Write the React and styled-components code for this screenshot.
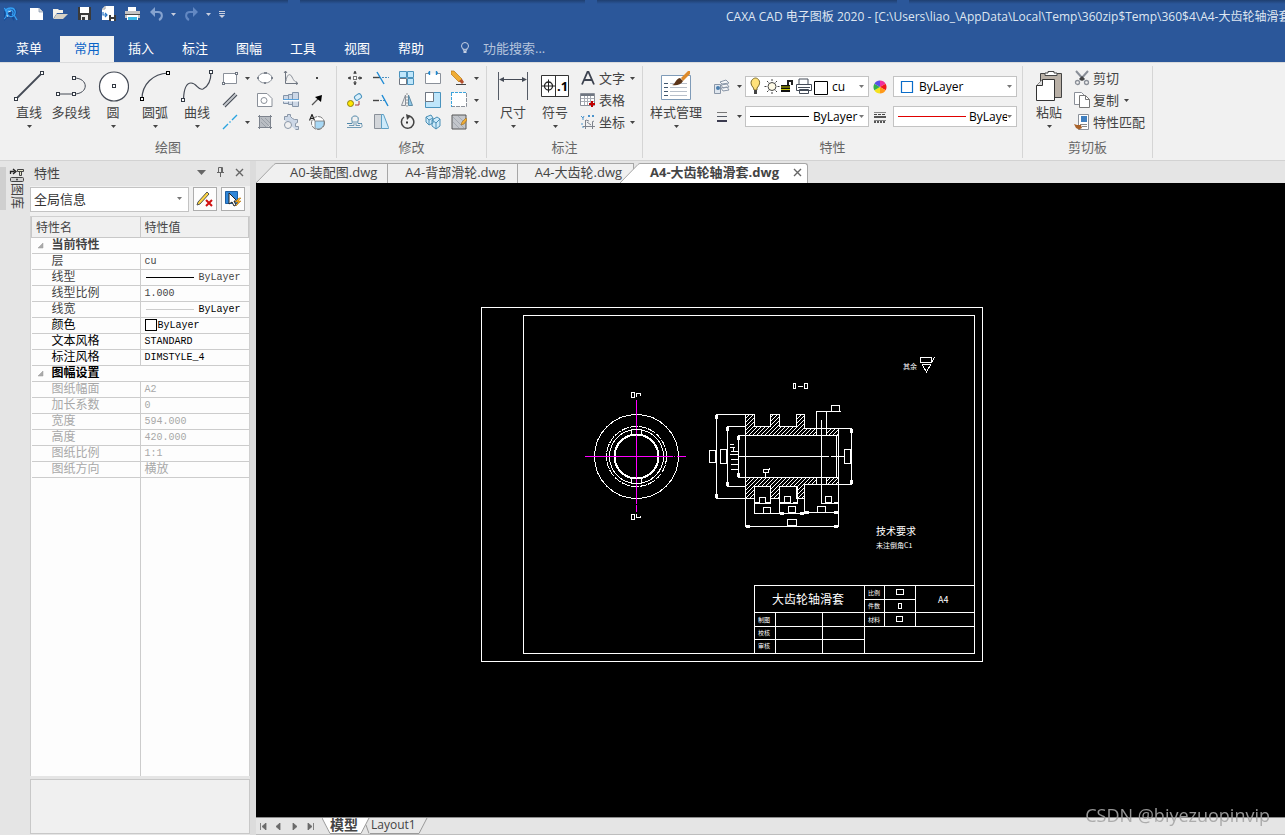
import { useState } from "react";
import styled, { createGlobalStyle, css } from "styled-components";

const GlobalStyle = createGlobalStyle`
  * {
    box-sizing: border-box;
  }

  body {
    margin: 0;
    background: #e5e5e5;
    color: #444444;
    font-family: "Open Sans", "Noto Sans CJK SC", sans-serif;
    font-size: 12px;
  }

  button,
  input,
  select {
    font: inherit;
    color: inherit;
    margin: 0;
    padding: 0;
    border: 0;
    background: transparent;
  }
`;

const Window = styled.div`
  display: flex;
  flex-direction: column;
  height: 100vh;
  overflow: hidden;
`;

/* ---------- title bar ---------- */

const Header = styled.header`
  background: #2b579a;
`;

const EdgeShadow = styled.div`
  display: flex;
  gap: 12px;
  height: 4px;
  overflow: hidden;
`;

const EdgePart = styled.span`
  flex: ${({ $grow }) => $grow} 1 0;
  background: linear-gradient(#1f3f70, #2b579a);
`;

const TitleBar = styled.div`
  display: grid;
  grid-template-columns: minmax(0, 565fr) minmax(0, 435fr);
  align-items: start;
  height: 32px;
  overflow: hidden;
`;

const QuickAccess = styled.div`
  display: flex;
  align-items: center;
  height: 20px;
`;

const QuickButton = styled.button`
  display: flex;
  align-items: center;
  justify-content: center;
  width: ${({ $narrow }) => ($narrow ? "11px" : "24px")};
  height: 20px;
`;

const WindowTitle = styled.div`
  color: #dfe6f1;
  font-size: 12px;
  line-height: 26px;
  white-space: nowrap;
`;

const MenuBar = styled.nav`
  display: flex;
  height: 26px;
`;

const MenuTab = styled.button`
  width: ${({ $wide }) => ($wide ? "60px" : "54px")};
  padding: ${({ $wide }) => ($wide ? "0 2px 2px 0" : "0 0 2px")};
  font-size: 13px;
  line-height: 24px;
  color: #ffffff;

  ${({ $active }) =>
    $active &&
    css`
      background: #f1f1f1;
      color: #0a64c8;
    `}
`;

const SearchBox = styled.label`
  display: flex;
  align-items: center;
  gap: 13px;
  padding: 0 0 2px 22px;
`;

const SearchInput = styled.input`
  width: 120px;
  font-size: 13px;
  color: #ffffff;
  outline: none;

  &::placeholder {
    color: #b4c3dc;
    opacity: 1;
  }
`;

/* ---------- ribbon ---------- */

const RibbonBar = styled.div`
  display: flex;
  flex: none;
  height: 99px;
  padding-top: 3px;
  background: #f1f1f1;
  border-top: 1px solid #dadbdc;
  border-bottom: 1px solid #d2d2d2;
`;

const GroupBox = styled.section`
  display: flex;
  flex-direction: column;
  height: 92px;
  padding: 0 5px;
  border-right: 1px solid #d5d5d5;
`;

const GroupBody = styled.div`
  display: flex;
  flex: 1;
`;

const GroupName = styled.div`
  font-size: 13px;
  line-height: 22px;
  color: #666666;
  text-align: center;
`;

const BigButton = styled.button`
  display: flex;
  flex-direction: column;
  align-items: center;
  width: ${({ $wide }) => ($wide ? "56px" : "42px")};
  height: 70px;
  padding-top: 4px;
  font-size: 13px;
  line-height: 20px;
  white-space: nowrap;
`;

const BigCaret = styled.span`
  padding-top: 3px;
`;

const ToolGrid = styled.div`
  display: grid;
  grid-template-columns: ${({ $columns }) => $columns};
  grid-auto-rows: 22px;
  align-content: start;
  padding-top: 1px;
`;

const DrawArea = styled.div`
  display: flex;
  padding: 0 1px 0 3px;
`;

const ToolButton = styled.button`
  display: flex;
  align-items: center;
  justify-content: center;
`;

const LabelTools = styled.div`
  display: flex;
  flex-direction: column;
  padding: 1px 2px 0 4px;
`;

const LabelTool = styled.button`
  display: flex;
  align-items: center;
  gap: ${({ $caret }) => ($caret ? "5px" : "3px")};
  height: 22px;
  font-size: 13px;
  line-height: 20px;
  white-space: nowrap;
`;

const ToolText = styled.span`
  display: flex;
  align-items: center;
  gap: 3px;
  padding-bottom: 1px;
`;

const PropertyGrid = styled.div`
  display: grid;
  grid-template-columns: 22px 12px 124px 24px 124px;
  grid-auto-rows: 21px;
  align-content: start;
  row-gap: 9px;
  padding: 10px 0 0 7px;
`;

const Combo = styled.label`
  display: flex;
  align-items: center;
  min-width: 0;
  padding: 0 4px;
  background: #ffffff;
  border: 1px solid #c3c3c3;
  color: #000000;
`;

const ComboSelect = styled.select`
  flex: 1;
  min-width: 0;
  padding-left: ${({ $plain }) => ($plain ? "0" : "3px")};
  appearance: none;
  outline: none;
  font-size: 12px;
`;

/* ---------- workspace ---------- */

const Workspace = styled.main`
  display: flex;
  flex: 1;
  min-height: 0;
`;

const DockStrip = styled.div`
  display: flex;
  gap: 3px;
  flex: none;
  width: 30px;
  padding-top: 6px;
`;

const DockGrip = styled.span`
  width: 6px;
  height: 43px;
  background: #cfcfcf;
`;

const DockButton = styled.button`
  display: flex;
  flex-direction: column;
  align-items: center;
  width: 16px;
  height: 44px;
`;

const DockText = styled.span`
  font-size: 13px;
  line-height: 13px;
  writing-mode: vertical-rl;
  text-orientation: sideways;
`;

const Panel = styled.aside`
  display: flex;
  flex-direction: column;
  flex: none;
  width: 220px;
  padding-bottom: 1px;
`;

const PanelHeader = styled.div`
  display: flex;
  align-items: center;
  height: 25px;
  padding: 0 1px 3px 4px;
`;

const PanelTitle = styled.h2`
  flex: 1;
  margin: 0;
  font-size: 13px;
  font-weight: 400;
`;

const PanelAction = styled.button`
  display: flex;
  align-items: center;
  justify-content: center;
  width: 19px;
  height: 18px;
`;

const PanelTools = styled.div`
  display: flex;
  gap: 4px;
  height: 30px;
  padding-top: 1px;
  background: #f0f0f0;
`;

const PanelCombo = styled(Combo)`
  width: 159px;
  height: 25px;
  padding: 0 6px 2px 3px;

  select {
    font-size: 13px;
    color: #333333;
  }
`;

const PanelTool = styled.button`
  display: flex;
  align-items: center;
  justify-content: center;
  width: 24px;
  height: 24px;
  border: 1px solid #adadad;
  background: #fdfdfd;
`;

const Sheet = styled.div`
  display: flex;
  flex-direction: column;
  flex: 1;
  background: #fdfdfd;
  border: 1px solid #d0d0d0;
  border-bottom: 0;
`;

const PropTable = styled.table`
  width: 100%;
  table-layout: fixed;
  border-collapse: collapse;
  font-family: "Liberation Mono", "Noto Sans CJK SC", monospace;
  font-size: 12px;
  line-height: 13px;
  text-align: left;
`;

const HeadCell = styled.th`
  width: 50%;
  height: 20px;
  padding: 6px 4px 0;
  background: #f0f0f0;
  border: 1px solid #c8c8c8;
  border-top: 0;
  font-weight: 400;
`;

const GroupCell = styled.th`
  height: 16px;
  padding: 2px 5px 0;
  border-bottom: 1px solid #cccccc;
  color: ${({ $color }) => $color};
`;

const GroupLabel = styled.span`
  display: flex;
  align-items: center;
  gap: 8px;
`;

const NameCell = styled.th`
  height: 16px;
  padding: 2px 0 0 20px;
  border-right: 1px solid #cccccc;
  border-bottom: 1px solid #cccccc;
  color: ${({ $color }) => $color};
  font-weight: 400;
`;

const ValueCell = styled.td`
  height: 16px;
  padding: ${({ $cjk }) => ($cjk ? "2px 4px 0" : "0 4px")};
  border-bottom: 1px solid #cccccc;
  color: ${({ $color }) => $color};
  font-size: ${({ $cjk }) => ($cjk ? "12px" : "10px")};
`;

const ValueLine = styled.span`
  display: flex;
  align-items: center;
  gap: ${({ $gap }) => $gap};
`;

const Filler = styled.div`
  display: grid;
  grid-template-columns: calc(50% + 1px) 1fr;
  flex: 1;
`;

const FillerCell = styled.div`
  border-right: ${({ $line }) => ($line ? "1px solid #cccccc" : "0")};
`;

const HintBox = styled.div`
  height: 55px;
  margin-top: 3px;
  background: #f0f0f0;
  border: 1px solid #c8c8c8;
`;

const Splitter = styled.div`
  flex: none;
  width: 6px;
  background: #dcdcdc;
`;

const Documents = styled.div`
  display: flex;
  flex-direction: column;
  flex: 1;
  min-width: 0;
`;

const DocTabs = styled.div`
  display: flex;
  height: 22px;
  padding-top: 2px;
`;

const DocTab = styled.div`
  display: flex;
  margin-left: ${({ $overlap }) => ($overlap ? "-14px" : "0")};
  z-index: ${({ $overlap }) => ($overlap ? 1 : 0)};
`;

const DocTabBody = styled.div`
  display: flex;
  align-items: center;
  gap: 14px;
  padding: ${({ $slanted }) => ($slanted ? "0 10px 2px 14px" : "0 11px 2px 17px")};
  background: ${({ $active }) => ($active ? "#ffffff" : "#f0f0f0")};
  border-top: 1px solid #a6a6a6;
  border-right: 1px solid #a6a6a6;
  ${({ $active }) =>
    $active &&
    css`
      padding: 0 5px 2px 10px;
      border-radius: 0 3px 0 0;
    `}
`;

const DocTabButton = styled.button`
  font-size: 13px;
  line-height: 17px;
  font-weight: ${({ $active }) => ($active ? 700 : 400)};
  white-space: nowrap;
`;

const CloseButton = styled.button`
  display: flex;
  width: 9px;
`;

const Canvas = styled.div`
  flex: 1;
  min-height: 0;
  background: #000000;
`;

const Drawing = styled.svg`
  display: block;
  width: 100%;
  height: 100%;
  font-family: "Noto Sans CJK SC", sans-serif;
`;

const SheetBar = styled.div`
  display: flex;
  height: 18px;
  border-top: 1px solid #8c8c8c;
  border-bottom: 1px solid #bdbdbd;
`;

const SheetArrow = styled.button`
  display: flex;
  align-items: center;
  justify-content: center;
  width: 16px;
  padding-right: 4px;
`;

const SheetTabs = styled.div`
  display: flex;
  padding-left: 2px;
`;

const SheetTab = styled.button`
  display: flex;
  line-height: 14px;
  font-size: ${({ $active }) => ($active ? "14px" : "12px")};
  font-weight: ${({ $active }) => ($active ? 700 : 400)};
`;

const SheetTabText = styled.span`
  height: 16px;
  padding-left: ${({ $active }) => ($active ? "0" : "1px")};
  background: ${({ $active }) => ($active ? "#ffffff" : "#e9e9e9")};
  border-bottom: 1px solid #9a9a9a;
`;

const Watermark = styled.div`
  position: fixed;
  right: 15px;
  bottom: 8px;
  color: rgba(165, 165, 165, 0.9);
  font-size: 18px;
  line-height: 24px;
  pointer-events: none;
`;

/* ---------- icons ---------- */

const Svg = styled.svg`
  display: block;
  flex: none;
`;

function Icon({ size = 16, w, h, children }) {
  const width = w || size;
  const height = h || size;
  return (
    <Svg width={width} height={height} viewBox={`0 0 ${width} ${height}`} fill="none" aria-hidden="true">
      {children}
    </Svg>
  );
}

function Caret({ color = "#444444" }) {
  return (
    <Icon w={5} h={3}>
      <path d="M0 0h5L2.500 3z" fill={color} />
    </Icon>
  );
}

function Node({ x, y, color = "#333a44" }) {
  return <rect x={x - 1} y={y - 1} width="3" height="3" fill="#fff" stroke={color} />;
}

const INK = "#444a55";

const icons = {
  app: (
    <Icon size={16}>
      <path d="M0 1l3 2 4-2 5 2 1 4-2 3-1 5-3-4-4 1-3 3 0-6z" fill="#174a94" />
      <path d="M1 5c3-4 9-4 10 0s-3 7-6 5-2-6 1-6 4 3 2 5M0 13c3-2 3-5 2-8M10 9l3 5M0 2l3 3" stroke="#35a0f4" strokeWidth="1.300" />
      <path d="M4 6l3-1M3 9l1 2" stroke="#bfe3ff" />
    </Icon>
  ),
  newFile: (
    <Icon size={16}>
      <path d="M2 2h9l4 4v8H2z" fill="#fff" />
      <path d="M11 2v4h4" fill="#dcdcdc" stroke="#6b7f9f" strokeWidth="0.600" />
    </Icon>
  ),
  openFile: (
    <Icon size={16}>
      <path d="M1 3h5l1 1h4v3H5l-4 6z" fill="#f4f2ea" />
      <path d="M4.500 8H16l-5 5H1.500z" fill="#d6d2c6" />
    </Icon>
  ),
  save: (
    <Icon size={16}>
      <path d="M2 1h13v13H2z" fill="#3a3a3a" />
      <path d="M4 1h9v6H4z" fill="#fff" />
      <path d="M5 9h7v5H5z" fill="#eee" />
      <path d="M6 11h3v3H6z" fill="#3a3a3a" />
    </Icon>
  ),
  saveAs: (
    <Icon size={16}>
      <path d="M5 0h9v14H2V3z" fill="#fff" />
      <path d="M2 3h3V0" stroke="#9a9a9a" />
      <path d="M3 6v3h4M5 7l2 2-2 2" stroke="#2b78c8" strokeWidth="1.200" />
      <path d="M9 9h7v6H9z" fill="#3a3a3a" />
      <path d="M11 9h3v2h-3zM11 13h3v2h-3z" fill="#fff" />
    </Icon>
  ),
  print: (
    <Icon size={16}>
      <path d="M4 1h8v4H4z" fill="#fff" />
      <path d="M1 5h15v7H1z" fill="#c4c4c4" />
      <path d="M1 8h15v1H1z" fill="#4a4a4a" />
      <path d="M3 9h11v5H3z" fill="#fff" />
      <path d="M4 11h9v3H4z" fill="#3cb9e6" />
    </Icon>
  ),
  undo: (
    <Icon size={16}>
      <path d="M4 6h6c5 0 5 6 1 8" stroke="#86a3cf" strokeWidth="2" />
      <path d="M7 1v10L2 6z" fill="#86a3cf" />
    </Icon>
  ),
  redo: (
    <Icon size={16}>
      <path d="M13 6H7c-5 0-5 6-1 8" stroke="#6388c2" strokeWidth="2" />
      <path d="M10 1v10l5-5z" fill="#6388c2" />
    </Icon>
  ),
  customize: (
    <Icon w={11} h={7}>
      <path d="M5 0.500h6M5 2.500h6" stroke="#c8cede" />
      <path d="M5 4h6L8 7z" fill="#c8cede" />
    </Icon>
  ),
  bulbOutline: (
    <Icon w={10} h={14}>
      <circle cx="5" cy="5" r="3.500" stroke="#c6d1e4" />
      <path d="M3 8l1 2h2l1-2" stroke="#c6d1e4" />
      <path d="M3.500 10h3v2h-3z" fill="#c6d1e4" />
    </Icon>
  ),
  line: (
    <Icon size={32}>
      <path d="M3 29L29 3" stroke={INK} strokeWidth="1.800" />
      <Node x={28.5} y={2.5} />
      <Node x={2.5} y={28.5} />
    </Icon>
  ),
  polyline: (
    <Icon size={32}>
      <path d="M3 24h16c15 0 15-16 0-16" stroke={INK} />
      <Node x={18.5} y={7.5} />
      <Node x={2.5} y={23.5} />
      <Node x={18.5} y={23.5} />
    </Icon>
  ),
  circle: (
    <Icon size={32}>
      <circle cx="17" cy="16.500" r="14.500" fill="#fff" stroke={INK} strokeWidth="1.200" />
      <Node x={16.5} y={15.5} />
    </Icon>
  ),
  arc: (
    <Icon size={32}>
      <path d="M3 29C3 14 14 4 29 3" stroke={INK} strokeWidth="1.200" />
      <Node x={28.5} y={2.5} color="#000" />
      <Node x={2.5} y={28.5} color="#000" />
    </Icon>
  ),
  curve: (
    <Icon size={32}>
      <path d="M2.500 29C3 18 6 13 10 13c6 0 7 8 12 6 6-3 8-9 8-17" stroke={INK} strokeWidth="1.200" />
      <Node x={29.5} y={1.5} />
      <Node x={1.5} y={29.5} />
    </Icon>
  ),
  rect: (
    <Icon size={16}>
      <path d="M1.500 3.500h13v10h-13z" fill="#fff" stroke="#8a9099" />
      <path d="M0 12h3v3H0zM13 2h3v3h-3z" fill="#6f7681" />
      <path d="M1 13h1v1H1zM14 3h1v1h-1z" fill="#fff" />
    </Icon>
  ),
  ellipse: (
    <Icon size={16}>
      <ellipse cx="8" cy="8" rx="7" ry="5" fill="#fff" stroke="#8a9099" />
      <path d="M7 2h3v2H7zM0 7h2v2H0zM14 7h2v2h-2zM7 12h2v2H7z" fill="#7d838d" />
    </Icon>
  ),
  formula: (
    <Icon size={16}>
      <path d="M2.500 1v12.500H15M1 3l1.500-2L4 3M13 12l2 1.500-2 1" stroke="#6f7681" />
      <path d="M3 11c1-7 4-8 6-4s3 5 5 5" stroke="#8a9099" />
    </Icon>
  ),
  point: (
    <Icon size={16}>
      <path d="M7 7h2v2H7z" fill="#444" />
    </Icon>
  ),
  parallel: (
    <Icon size={16}>
      <path d="M1 13L13 1M3 15L15 3" stroke="#4d535d" strokeWidth="1.200" />
      <path d="M2 14L14 2" stroke="#c4c8cf" />
    </Icon>
  ),
  hole: (
    <Icon size={16}>
      <path d="M0.500 1.500H10l5 5v8H0.500z" fill="#fff" stroke="#8a9099" />
      <circle cx="7" cy="8.500" r="3" stroke="#8a9099" />
    </Icon>
  ),
  shaft: (
    <Icon size={16}>
      <path d="M0.500 3.500h5v8h-5zM5.500 2.500h4v10h-4zM9.500 0.500h6v14h-6z" fill="#ccd7e6" stroke="#8494a8" />
      <path d="M0 8.500h16" stroke="#fff" strokeWidth="2" />
      <path d="M0 7.500h16" stroke="#5ba3dc" />
    </Icon>
  ),
  arrow: (
    <Icon size={16}>
      <path d="M3 13l7-7" stroke="#555" strokeWidth="1.200" />
      <path d="M13 3l-1 7-6-5z" fill="#000" />
    </Icon>
  ),
  centerline: (
    <Icon size={16}>
      <path d="M1 15l5-5M7.500 8.500l1-1M10 6l5-5" stroke="#29a4e0" strokeWidth="1.400" />
    </Icon>
  ),
  hatch: (
    <Icon size={16}>
      <path d="M3 3h11v7l-4 4H3z" fill="#b9bdc3" />
      <path d="M4 8l5 5M4 4l9 9M8 4l5 5" stroke="#9aa0a8" />
      <path d="M2.500 1v14M13.500 1v14M1 2.500h14M1 13.500h14" stroke="#7d838d" />
    </Icon>
  ),
  gear: (
    <Icon size={16}>
      <path d="M1.500 6V2.500h3v-2h3v2l2 2 2 1h3v3l-2 1v3h3v3h-3" fill="#ccd7e6" stroke="#8a97a8" />
      <circle cx="5" cy="11" r="3.500" fill="#f1f1f1" stroke="#8a97a8" />
    </Icon>
  ),
  textRegion: (
    <Icon size={16}>
      <circle cx="9" cy="9" r="6.500" fill="#fff" stroke="#777" strokeDasharray="5 1" />
      <path d="M6 7h9c1 5-3 8-6 8-2 0-3-1-3-2z" fill="#a8d8f5" stroke="#777" strokeWidth="0.800" />
      <path d="M0.500 6.500L3 0.500l2.500 6M1.500 4.500h3" stroke="#222" strokeWidth="1.200" />
    </Icon>
  ),
  move: (
    <Icon size={16}>
      <path d="M8 1v3M8 11v4M1 8h3M11 8h4" stroke="#555" strokeWidth="1.400" />
      <path d="M8 1l2 2.500H6zM8 15l2-2.500H6zM1 8l2.500-2v4zM15 8l-2.500-2v4z" fill="#444" />
      <rect x="6.500" y="6.500" width="3" height="3" fill="#fff" stroke="#777" />
    </Icon>
  ),
  trim: (
    <Icon size={16}>
      <path d="M0 7.500h7" stroke="#444" strokeWidth="1.400" />
      <path d="M4 2l7 12" stroke="#1c8ad4" strokeWidth="1.400" />
      <path d="M9 7.500h7" stroke="#4a8fc0" strokeDasharray="2 1" />
    </Icon>
  ),
  array: (
    <Icon size={16}>
      <path d="M0.500 1.500h7v6h-7zM8.500 1.500h6v6h-6zM8.500 8.500h6v6h-6z" fill="#bfe6fb" stroke="#4a93bd" />
      <path d="M0.500 8.500h7v6h-7z" fill="#fff" stroke="#6f7681" />
    </Icon>
  ),
  breakLine: (
    <Icon size={16}>
      <path d="M4 3.500H0.500v10h15v-10H12" fill="#fff" stroke="#8a9099" />
      <path d="M4.500 1v4M11.500 1v4M3 3h2M11 3h2" stroke="#2488cc" strokeWidth="1.400" />
    </Icon>
  ),
  erase: (
    <Icon size={16}>
      <path d="M0 1l3 0 8 8-3 3-8-8z" fill="#f0ad35" stroke="#b87516" strokeWidth="0.700" />
      <path d="M8 11l3-2 2 3-2 2z" fill="#b4502e" />
      <path d="M5 14.500h10" stroke="#444" />
    </Icon>
  ),
  copyMove: (
    <Icon size={16}>
      <rect x="7.500" y="2.500" width="7" height="5" rx="2" transform="rotate(-35 11 5)" fill="#d8effb" stroke="#4a93bd" />
      <circle cx="3.500" cy="11.500" r="3" fill="#ffe600" stroke="#8b8115" />
      <path d="M8 13h4v-4" stroke="#a43a3a" />
    </Icon>
  ),
  extend: (
    <Icon size={16}>
      <path d="M0 8.500h6" stroke="#444" strokeWidth="1.400" />
      <path d="M7 8.500h5" stroke="#4a8fc0" strokeDasharray="2 1" />
      <path d="M9 3l6 11" stroke="#1c8ad4" strokeWidth="1.400" />
    </Icon>
  ),
  mirror: (
    <Icon size={16}>
      <path d="M6.500 3v10.500h-4z" fill="#eee" stroke="#8a9099" />
      <path d="M9.500 3v10.500h4z" fill="#8fc8e8" stroke="#5f8ba5" />
      <path d="M8 1v14" stroke="#999" strokeDasharray="2 1" />
    </Icon>
  ),
  scale: (
    <Icon size={16}>
      <path d="M0.500 0.500h15v15h-15z" fill="#bfe6fb" stroke="#4a93bd" />
      <path d="M0.500 0.500h8v9h-8z" fill="#fff" stroke="#6f7681" />
    </Icon>
  ),
  stretch: (
    <Icon size={16}>
      <path d="M0.500 0.500h15v14h-15z" fill="#fff" />
      <path d="M15.500 1v13.500H1" stroke="#8a9099" strokeDasharray="4 1" />
      <path d="M0 0.500h16M0.500 1v14" stroke="#3ba4dc" strokeDasharray="3 1" />
    </Icon>
  ),
  offset: (
    <Icon size={16}>
      <path d="M0 9.500h5c1-2-1-3 0-6 1-2 5-2 6 0 1 3-1 4 0 6h4" stroke="#4f86a8" />
      <path d="M0 13.500h14c2-1 1-4-1-4M2 11.500h5V7M9 7v4.500h4" stroke="#6f9ab5" />
    </Icon>
  ),
  chamfer: (
    <Icon size={16}>
      <path d="M1.500 0.500h7v14h-7z" fill="#d3d6da" stroke="#8a9099" />
      <path d="M8.500 0.500h2l5 13v1h-7z" fill="#cdeafa" stroke="#5c9fc4" />
    </Icon>
  ),
  rotate: (
    <Icon size={16}>
      <path d="M5 3a6.200 6.200 0 1 0 5-1" stroke="#444" strokeWidth="1.500" />
      <path d="M7 0l5 2-4 4z" fill="#444" />
      <path d="M7 7.500h2v2H7z" fill="#333" />
    </Icon>
  ),
  block: (
    <Icon size={16}>
      <path d="M1 3l5-2 2 3v5l-4 2-3-3zM7 6l5-3 3 2v7l-4 3-4-3z" fill="#cdeafa" stroke="#4a8fb5" />
      <path d="M1 3l3 3v5M4 6l4-2M7 6l4 3v6M11 9l4-4" stroke="#4a8fb5" />
    </Icon>
  ),
  hatchEdit: (
    <Icon size={16}>
      <path d="M1 1h14v14H1z" fill="#c3c6cb" stroke="#555" />
      <path d="M2 8l6 6M2 3l11 11M7 2l7 7" stroke="#a6abb3" />
      <path d="M15 4l-4 4-1 3 3-1 3-4z" fill="#f0ad35" stroke="#9a6a1c" strokeWidth="0.600" />
    </Icon>
  ),
  dimension: (
    <Icon size={32}>
      <path d="M1.500 2v28M30.500 2v28" stroke="#555b66" />
      <path d="M3 9.500h26" stroke={INK} />
      <path d="M2 9.500l5-2.500v5zM30 9.500L25 7v5z" fill={INK} />
    </Icon>
  ),
  symbol: (
    <Icon size={32}>
      <path d="M2.500 5.500h27v21h-27zM16.500 5.500v21" fill="#fff" stroke="#333" />
      <circle cx="9.500" cy="16" r="4" stroke="#222" strokeWidth="1.300" />
      <path d="M3 16h13M9.500 9.500v13" stroke="#222" />
      <text x="18" y="21" fontSize="13" fontWeight="700" fill="#000">.1</text>
    </Icon>
  ),
  letter: (
    <Icon size={16}>
      <path d="M2 14.500L7.500 2h1L14 14.500M4.500 10h7" stroke="#3d4350" strokeWidth="1.800" />
    </Icon>
  ),
  table: (
    <Icon size={16}>
      <path d="M0.500 1.500h14v12H0.500z" fill="#fff" stroke="#8a8f98" />
      <path d="M1 2h13v2H1z" fill="#6f7681" />
      <path d="M1 6.500h13M1 9.500h13M4.500 4v9M7.500 4v9M10.500 4v9" stroke="#a8adb5" />
      <path d="M12 9v6M9 12h6" stroke="#c00000" strokeWidth="2" />
    </Icon>
  ),
  coord: (
    <Icon size={16}>
      <path d="M1 2l2 2 1-2M3 4v2M8 1l2 2M10 1l-2 2M12 1l2 2M14 1l-2 2M2 9v2M2 13h2" stroke="#4a93cc" />
      <path d="M5.500 6v9M12.500 8v7M3 12.500h12M7 8l4 3M6 6l3 1M12 8l2-1" stroke="#7d838d" />
    </Icon>
  ),
  styles: (
    <Icon size={32}>
      <path d="M1.500 5.500h29v24h-29z" fill="#fff" stroke="#7f9bb8" />
      <path d="M4 13.500h4M4 17.500h4M4 21.500h4M4 25.500h4" stroke="#40566e" />
      <path d="M10 13.500h17M10 17.500h17M10 21.500h17M10 25.500h17" stroke="#b7bfca" />
      <path d="M21 8l7-7h2v3l-7 7z" fill="#dd8a2b" />
      <path d="M12 15c4-1 3-6 8-7l3 3c-2 4-7 5-11 4z" fill="#5b3418" />
    </Icon>
  ),
  layers: (
    <Icon size={16}>
      <path d="M6 3l6-2 3 3-7 1zM7 6l6-1 2 3-6 1zM7 9l6-1 2 3-6 1z" fill="#f5f6f8" stroke="#8a97a8" />
      <path d="M0.500 5.500h6v9h-6z" fill="#dfe6ee" stroke="#8a97a8" />
      <circle cx="4" cy="9" r="2" fill="#4b7fae" />
    </Icon>
  ),
  lines: (
    <Icon size={16}>
      <path d="M3 3.500h10" stroke="#777" />
      <path d="M3 7.500h10" stroke="#555b66" />
      <path d="M3 12h10" stroke="#3b3b4f" strokeWidth="2" />
    </Icon>
  ),
  wheel: (
    <Icon size={16}>
      <path d="M7 8V1.500a6.500 6.500 0 0 1 5.600 3.200z" fill="#f0309c" />
      <path d="M7 8l5.600-3.300a6.500 6.500 0 0 1 0 6.500z" fill="#f01818" />
      <path d="M7 8l5.600 3.200A6.500 6.500 0 0 1 7 14.500z" fill="#ff9a1a" />
      <path d="M7 8v6.500a6.500 6.500 0 0 1-5.600-3.300z" fill="#f4e11e" />
      <path d="M7 8l-5.600 3.200a6.500 6.500 0 0 1 0-6.500z" fill="#33b04a" />
      <path d="M7 8L1.400 4.700A6.500 6.500 0 0 1 7 1.500z" fill="#5a50e8" />
    </Icon>
  ),
  weights: (
    <Icon size={16}>
      <path d="M1 3.500h12M1 11.500h12" stroke="#888" />
      <path d="M1 5.500h12" stroke="#444" strokeDasharray="3 1" />
      <path d="M1 8h12" stroke="#555" strokeWidth="2" />
      <path d="M1 13h12" stroke="#555" strokeWidth="2" strokeDasharray="2 1" />
    </Icon>
  ),
  layerState: (
    <Icon w={79} h={19}>
      <path d="M3.500 11C-2 5 3 1 5.500 1s7 4 1.500 10v2h-3z" fill="#ffe27a" stroke="#7a6a2a" />
      <path d="M4 13h3v4H4z" fill="#444" />
      <circle cx="22" cy="9.500" r="4" fill="#fffbe6" stroke="#444" />
      <path d="M22 2v2M22 15v2M14.500 9.500h2M27.500 9.500h2M17 4l1.500 1.500M27 4l-1.500 1.500M17 15l1.500-1.500M27 15l-1.500-1.500" stroke="#444" />
      <path d="M31 8h9v7h-9z" fill="#111" />
      <path d="M31 10h9M31 12.500h9" stroke="#c8c800" />
      <path d="M38 8V4h4v4" stroke="#222" strokeWidth="2" />
      <path d="M49 7V2h9v5M46.500 7.500h15v6h-15zM49.500 12.500h9v4h-9z" fill="#fff" stroke="#444c58" />
      <path d="M48 10.500h12" stroke="#444c58" />
      <path d="M64.500 4.500h13v13h-13z" fill="#fff" stroke="#000" />
    </Icon>
  ),
  swatch: (
    <Icon w={18} h={16}>
      <path d="M3.500 2.500h11v11h-11z" fill="#fff" stroke="#0a6cc8" strokeWidth="1.200" />
    </Icon>
  ),
  blackLine: (
    <Icon w={60} h={3}>
      <path d="M0 1.500h59" stroke="#000" />
    </Icon>
  ),
  redLine: (
    <Icon w={68} h={3}>
      <path d="M0 1.500h68" stroke="#e00000" />
    </Icon>
  ),
  paste: (
    <Icon size={32}>
      <path d="M7.500 3.500h21v24h-21z" fill="#b9b0a6" stroke="#444" />
      <path d="M12 5.500V3h3V1.500h6V3h3v2.500z" fill="#fff" stroke="#444" />
      <path d="M9.500 9.500h12v21h-18v-15z" fill="#fff" stroke="#333" />
      <path d="M3.500 15.500h6v-6" stroke="#333" fill="#ddd" />
    </Icon>
  ),
  cut: (
    <Icon size={16}>
      <path d="M2 1l8 9M14 1l-8 9" stroke="#8a8f98" strokeWidth="2" />
      <path d="M5 9l3-3 3 3-3 2z" fill="#444" />
      <circle cx="3.500" cy="12.500" r="2" stroke="#8a8f98" strokeWidth="1.300" />
      <circle cx="12.500" cy="12.500" r="2" stroke="#8a8f98" strokeWidth="1.300" />
    </Icon>
  ),
  copy: (
    <Icon size={16}>
      <path d="M0.500 0.500h7l3 3v9h-10z" fill="#fff" stroke="#8a8f98" />
      <path d="M5.500 3.500h6l4 4v8h-10z" fill="#fff" stroke="#777" />
      <path d="M11.500 3.500v4h4" stroke="#777" />
    </Icon>
  ),
  match: (
    <Icon size={16}>
      <path d="M4.500 0.500h10v15h-10z" fill="#fff" stroke="#8a9099" />
      <path d="M7 2h6v6H7z" fill="#3f7fc0" />
      <path d="M6 10.500h7M8 12.500h5" stroke="#888" />
      <path d="M0 10l3 1 4 0 1 3-3 1.500-3-1.500z" fill="#a8622a" />
    </Icon>
  ),
  dropDown: (
    <Icon w={9} h={5}>
      <path d="M0 0h9L4.500 5z" fill="#666" />
    </Icon>
  ),
  pin: (
    <Icon w={9} h={10}>
      <path d="M2.500 0.500h4v5h-4zM1 5.500h7M4.500 6v4M5.500 1v4" stroke="#666" />
    </Icon>
  ),
  close: (
    <Icon w={9} h={9}>
      <path d="M1 1l7 7M8 1L1 8" stroke="#666" strokeWidth="1.400" />
    </Icon>
  ),
  pencilX: (
    <Icon size={18}>
      <path d="M2 12L11 2l2 2L4 14l-3 1z" fill="#ffd640" stroke="#555" />
      <path d="M10 10l6 6M16 10l-6 6" stroke="#d01010" strokeWidth="2" />
    </Icon>
  ),
  pick: (
    <Icon size={18}>
      <path d="M1.500 1.500h12v12h-12z" fill="#2f86d8" stroke="#1d5fa3" />
      <path d="M5 3v11l3-2 2 4 2-1-2-4h3z" fill="#fff" stroke="#222" />
      <path d="M15 8l-4 4h3l-2 4 5-5h-3l3-3z" fill="#ffb020" stroke="#a86a00" strokeWidth="0.500" />
    </Icon>
  ),
  library: (
    <Icon size={16}>
      <path d="M1.500 7V4.500h4M4 2l3 2.500L4 7" stroke="#222" strokeWidth="1.300" />
      <path d="M8.500 2.500h6v2h-6zM10.500 4.500h2v4h-2z" fill="#e3e3c8" stroke="#444" />
      <rect x="1.500" y="10.500" width="13" height="4" rx="1" fill="#d0d0d0" stroke="#444" />
      <circle cx="8" cy="12.500" r="1" fill="#444" />
    </Icon>
  ),
  collapse: (
    <Icon w={7} h={7}>
      <path d="M6 0v5H1z" fill="#aaa" stroke="#999" strokeWidth="0.500" />
    </Icon>
  ),
};

/* ---------- data ---------- */

const menus = ["菜单", "常用", "插入", "标注", "图幅", "工具", "视图", "帮助"];

const drawBig = [
  ["直线", "line", true],
  ["多段线", "polyline", false],
  ["圆", "circle", true],
  ["圆弧", "arc", true],
  ["曲线", "curve", true],
];

// null leaves a grid cell empty, "caret" puts a drop-down arrow in it
const drawTools = [
  "rect", "caret", "ellipse", "formula", "point",
  "parallel", null, "hole", "shaft", "arrow",
  "centerline", "caret", "hatch", "gear", "textRegion",
];

const modifyTools = [
  "move", "trim", "array", "breakLine", "erase", "caret",
  "copyMove", "extend", "mirror", "scale", "stretch", "caret",
  "offset", "chamfer", "rotate", "block", "hatchEdit", "caret",
];

const noteTools = [
  ["文字", "letter", true],
  ["表格", "table", false],
  ["坐标", "coord", true],
];

const clipTools = [
  ["剪切", "cut", false],
  ["复制", "copy", true],
  ["特性匹配", "match", false],
];

const properties = [
  {
    title: "当前特性",
    color: "#444444",
    rows: [
      { name: "层", value: "cu" },
      { name: "线型", value: "ByLayer", line: "#000000" },
      { name: "线型比例", value: "1.000" },
      { name: "线宽", value: "ByLayer", line: "#cccccc", strong: true },
      { name: "颜色", value: "ByLayer", box: true, dark: true },
      { name: "文本风格", value: "STANDARD", dark: true },
      { name: "标注风格", value: "DIMSTYLE_4", dark: true },
    ],
  },
  {
    title: "图幅设置",
    color: "#000000",
    rows: [
      { name: "图纸幅面", value: "A2", muted: true },
      { name: "加长系数", value: "0", muted: true },
      { name: "宽度", value: "594.000", muted: true },
      { name: "高度", value: "420.000", muted: true },
      { name: "图纸比例", value: "1:1", muted: true },
      { name: "图纸方向", value: "横放", muted: true, cjk: true },
    ],
  },
];

const documents = ["A0-装配图.dwg", "A4-背部滑轮.dwg", "A4-大齿轮.dwg", "A4-大齿轮轴滑套.dwg"];

/* ---------- parts ---------- */

function Group({ name, children }) {
  return (
    <GroupBox>
      <GroupBody>{children}</GroupBody>
      <GroupName>{name}</GroupName>
    </GroupBox>
  );
}

function Big({ label, icon, caret = true, wide }) {
  return (
    <BigButton type="button" $wide={wide}>
      {icons[icon]}
      {label}
      {caret && (
        <BigCaret>
          <Caret />
        </BigCaret>
      )}
    </BigButton>
  );
}

function Tools({ items, columns }) {
  return (
    <ToolGrid $columns={columns}>
      {items.map((item, i) =>
        item ? (
          <ToolButton key={i} type="button" aria-label={item}>
            {item === "caret" ? <Caret /> : icons[item]}
          </ToolButton>
        ) : (
          <span key={i} />
        )
      )}
    </ToolGrid>
  );
}

function LabelledTools({ items }) {
  return (
    <LabelTools>
      {items.map(([label, icon, caret]) => (
        <LabelTool key={label} type="button" $caret={caret}>
          <ToolText>
            {icons[icon]}
            {label}
          </ToolText>
          {caret && <Caret />}
        </LabelTool>
      ))}
    </LabelTools>
  );
}

function ComboBox({ label, value, icon }) {
  return (
    <Combo>
      {icons[icon]}
      <ComboSelect aria-label={label} defaultValue={value}>
        <option>{value}</option>
      </ComboSelect>
      <Caret color="#777777" />
    </Combo>
  );
}

function Ribbon() {
  return (
    <RibbonBar>
      <Group name="绘图">
        <DrawArea>
          {drawBig.map(([label, icon, caret]) => (
            <Big key={label} label={label} icon={icon} caret={caret} />
          ))}
          <Tools items={drawTools} columns="24px 10px 26px 26px 26px" />
        </DrawArea>
      </Group>
      <Group name="修改">
        <Tools items={modifyTools} columns="repeat(5, 26px) 9px" />
      </Group>
      <Group name="标注">
        <Big label="尺寸" icon="dimension" />
        <Big label="符号" icon="symbol" />
        <LabelledTools items={noteTools} />
      </Group>
      <Group name="特性">
        <Big label="样式管理" icon="styles" wide />
        <PropertyGrid>
          <ToolButton type="button" aria-label="图层">{icons.layers}</ToolButton>
          <ToolButton type="button" aria-label="图层列表"><Caret /></ToolButton>
          <ComboBox label="当前层" value="cu" icon="layerState" />
          <ToolButton type="button" aria-label="颜色">{icons.wheel}</ToolButton>
          <ComboBox label="当前颜色" value="ByLayer" icon="swatch" />
          <ToolButton type="button" aria-label="线型">{icons.lines}</ToolButton>
          <ToolButton type="button" aria-label="线型列表"><Caret /></ToolButton>
          <ComboBox label="当前线型" value="ByLayer" icon="blackLine" />
          <ToolButton type="button" aria-label="线宽">{icons.weights}</ToolButton>
          <ComboBox label="当前线宽" value="ByLayer" icon="redLine" />
        </PropertyGrid>
      </Group>
      <Group name="剪切板">
        <Big label="粘贴" icon="paste" />
        <LabelledTools items={clipTools} />
      </Group>
    </RibbonBar>
  );
}

function PropertyRow({ row }) {
  const nameColor = row.muted ? "#a8a8a8" : row.dark ? "#000000" : "#444444";
  const valueColor = row.muted ? "#a8a8a8" : row.dark || row.strong ? "#000000" : "#444444";
  return (
    <tr>
      <NameCell scope="row" $color={nameColor}>{row.name}</NameCell>
      <ValueCell $color={valueColor} $cjk={row.cjk}>
        <ValueLine $gap={row.box ? "1px" : "4px"}>
          {row.line && (
            <Icon w={50} h={3}>
              <path d="M1 1.500h48" stroke={row.line} />
            </Icon>
          )}
          {row.box && (
            <Icon w={12} h={12}>
              <rect x="0.500" y="0.500" width="11" height="11" fill="#fff" stroke="#000" />
            </Icon>
          )}
          {row.value}
        </ValueLine>
      </ValueCell>
    </tr>
  );
}

function PropertyPanel() {
  return (
    <Panel>
      <PanelHeader>
        <PanelTitle>特性</PanelTitle>
        <PanelAction type="button" aria-label="选项">{icons.dropDown}</PanelAction>
        <PanelAction type="button" aria-label="固定">{icons.pin}</PanelAction>
        <PanelAction type="button" aria-label="关闭">{icons.close}</PanelAction>
      </PanelHeader>
      <PanelTools>
        <PanelCombo>
          <ComboSelect $plain aria-label="信息范围" defaultValue="全局信息">
            <option>全局信息</option>
          </ComboSelect>
          <Caret color="#777777" />
        </PanelCombo>
        <PanelTool type="button" aria-label="清除选择">{icons.pencilX}</PanelTool>
        <PanelTool type="button" aria-label="拾取">{icons.pick}</PanelTool>
      </PanelTools>
      <Sheet>
        <PropTable>
          <thead>
            <tr>
              <HeadCell scope="col">特性名</HeadCell>
              <HeadCell scope="col">特性值</HeadCell>
            </tr>
          </thead>
          {properties.map((group) => (
            <tbody key={group.title}>
              <tr>
                <GroupCell colSpan={2} $color={group.color}>
                  <GroupLabel>
                    {icons.collapse}
                    {group.title}
                  </GroupLabel>
                </GroupCell>
              </tr>
              {group.rows.map((row) => (
                <PropertyRow key={row.name} row={row} />
              ))}
            </tbody>
          ))}
        </PropTable>
        <Filler>
          <FillerCell $line />
          <FillerCell />
        </Filler>
      </Sheet>
      <HintBox />
    </Panel>
  );
}

function Slant({ fill }) {
  return (
    <Icon w={20} h={20}>
      <path d="M0 20L18 1.500Q19 0.500 20 0.500V20z" fill={fill} />
      <path d="M0 20L18 1.500Q19 0.500 20 0.500" stroke="#a6a6a6" />
    </Icon>
  );
}

function DocumentTabs() {
  const [current, setCurrent] = useState(3);
  return (
    <DocTabs>
      {documents.map((name, i) => {
        const active = i === current;
        const slanted = i === 0 || i === 3;
        return (
          <DocTab key={name} $overlap={i === 3}>
            {slanted && <Slant fill={active ? "#ffffff" : "#f0f0f0"} />}
            <DocTabBody $active={active} $slanted={slanted}>
              <DocTabButton type="button" $active={active} onClick={() => setCurrent(i)}>
                {name}
              </DocTabButton>
              {active && (
                <CloseButton type="button" aria-label="关闭图纸">
                  {icons.close}
                </CloseButton>
              )}
            </DocTabBody>
          </DocTab>
        );
      })}
    </DocTabs>
  );
}

function boxPath([x, y, w, h]) {
  return `M${x}.5 ${y}.5h${w}v${h}h-${w}z`;
}

const valueBoxes = [
  [709, 450, 6, 12], [720, 449, 6, 14], [844, 449, 6, 14], [831, 405, 8, 6],
  [759, 497, 6, 6], [784, 496, 6, 6], [825, 496, 6, 6],
  [763, 507, 7, 6], [788, 506, 7, 6], [817, 506, 8, 6], [787, 519, 9, 6],
  [793, 383, 2, 5], [804, 383, 3, 5], [631, 392, 3, 5], [631, 514, 3, 5],
  [896, 589, 7, 5], [898, 603, 3, 5], [896, 616, 6, 5],
  [920, 357, 11, 5], [763, 469, 5, 3], [631, 429, 10, 5], [631, 478, 10, 5],
  [715, 415, 2, 3], [715, 494, 2, 3], [726, 427, 2, 3], [726, 482, 2, 3],
  [737, 436, 2, 3], [737, 473, 2, 3], [850, 429, 2, 3], [850, 480, 2, 3],
  [746, 525, 3, 2], [834, 525, 3, 2], [755, 502, 3, 1], [766, 502, 3, 1],
  [780, 502, 3, 1], [793, 502, 3, 1], [834, 502, 3, 1], [805, 511, 3, 2], [834, 511, 3, 2],
  [800, 512, 3, 2], [780, 512, 3, 2],
];

function SleeveDrawing() {
  return (
    <Drawing viewBox="256 183 1029 634" preserveAspectRatio="xMidYMid meet" role="img" aria-label="大齿轮轴滑套">
      <defs>
        <pattern id="hatch" width="4" height="4" patternUnits="userSpaceOnUse">
          <path d="M-1 5L5 -1M-1 1L1 -1M3 5L5 3" stroke="#fff" />
        </pattern>
      </defs>

      {/* sheet frame and title block */}
      <g stroke="#fff" fill="none" shapeRendering="crispEdges">
        <path d="M481.500 307.500h501v354h-501zM523.500 315.500h451v338h-451z" />
        <path d="M754.500 653V585.500H974M754 612.500h220M864 599.500h51M754 626.500h220M754 639.500h110M864.500 585v68M884.500 585v41M915.500 585v41M775.500 612v41M822.500 612v41" />
      </g>

      {/* front view */}
      <g stroke="#fff" fill="none" shapeRendering="crispEdges">
        <circle cx="636.500" cy="456.500" r="42" />
        <circle cx="636.500" cy="456.500" r="30" strokeDasharray="8 1" />
        <circle cx="636.500" cy="456.500" r="27" />
        <circle cx="636.500" cy="456.500" r="22" strokeWidth="2" />
        <path d="M636.500 397v-3.500h4v2M636.500 514v3.500h4v-2" />
      </g>
      <path d="M636.500 400v104M636.500 505v7M585 456.500h88M674 456.500h1M677 456.500h9" stroke="#f0f" shapeRendering="crispEdges" />

      {/* section */}
      <path
        d="M745 414h9v12h16v-12h9v12h18v-12h7v14h12v7h-71zM827 428h11v7h-11zM745 478h71v6h-12v14h-7v-12h-18v12h-9v-12h-16v12h-9zM827 478h11v6h-11z"
        fill="url(#hatch)"
      />
      <g stroke="#fff" fill="none" shapeRendering="crispEdges">
        <path d="M745.500 414.500h9v12h16v-12h9v12h17v-12h8v14h34v56h-34v14h-8v-12h-17v12h-9v-12h-16v12h-9z" />
        <path d="M738 435.500h101M738 477.500h101M836.500 435v42M816.500 435v-24M826.500 435v-24M816 411.500h25M821.500 420v83M816.500 477v8M826.500 477v8M739 456.500h90M831 456.500h14" />
        <path d="M716.500 414v84M716 414.500h29M716 498.500h29M727.500 426v60M727 426.500h18M727 486.500h18M738.500 435v43M851.500 428v56M838 428.500h14M838 484.500h14" />
        <path d="M754.500 498v16M770.500 486v18M779.500 498v16M797.500 486v18M804.500 498v16M745.500 498v29M838.500 484v43M754 503.500h16M779 503.500h18M821 503.500h17M754 513.500h50M804 512.500h34M745 526.500h93" />
        <path d="M730 444.500h4M730 447.500h5M733.500 448v4M731 451.500h7M730 454.500h8M731 459.500h7M731 464.500h7M731 469.500h7M765.500 473v4M768 472l2-4M798 386.500h5" />
        {valueBoxes.map((box) => (
          <path key={box.join()} d={boxPath(box)} />
        ))}
        <path d="M922 364.500h9M922.500 365l4 7 4-7M931.500 363l3-6" />
      </g>

      <g fill="#fff">
        <text x="903" y="369" fontSize="7">其余</text>
        <text x="876" y="535" fontSize="10">技术要求</text>
        <text x="876" y="548" fontSize="7">未注倒角C1</text>
        <text x="772" y="604" fontSize="12">大齿轮轴滑套</text>
        <text x="938" y="603" fontSize="9">A4</text>
        <text x="868" y="595" fontSize="6">比例</text>
        <text x="868" y="608" fontSize="6">件数</text>
        <text x="868" y="622" fontSize="6">材料</text>
        <text x="758" y="622" fontSize="6">制图</text>
        <text x="758" y="635" fontSize="6">校核</text>
        <text x="758" y="648" fontSize="6">审核</text>
      </g>
    </Drawing>
  );
}

const arrows = [
  ["首页", "M2.500 0v7M8 0v7L4 3.500z"],
  ["上一页", "M6 0v7L2 3.500z"],
  ["下一页", "M3 0v7l4-3.500z"],
  ["末页", "M2 0v7l4-3.500zM7.500 0v7"],
];

function SheetNavigation() {
  return (
    <SheetBar>
      {arrows.map(([label, d]) => (
        <SheetArrow key={label} type="button" aria-label={label}>
          <Icon w={9} h={7}>
            <path d={d} fill="#6a6a6a" stroke="#6a6a6a" strokeWidth="0.800" />
          </Icon>
        </SheetArrow>
      ))}
      <SheetTabs>
        <SheetTab type="button" $active>
          <Icon w={8} h={16}>
            <path d="M0 0h8v16z" fill="#fff" />
            <path d="M0 0l8 15.500" stroke="#9a9a9a" />
          </Icon>
          <SheetTabText $active>模型</SheetTabText>
          <Icon w={12} h={16}>
            <path d="M0 0h11L3 16H0z" fill="#fff" />
            <path d="M11 0L3 15.500H0M8 7l3 8.500" stroke="#9a9a9a" />
          </Icon>
        </SheetTab>
        <SheetTab type="button">
          <SheetTabText>Layout1</SheetTabText>
          <Icon w={12} h={16}>
            <path d="M0 0h11L3 16H0z" fill="#e9e9e9" />
            <path d="M11 0L3 15.500H0" stroke="#9a9a9a" />
          </Icon>
        </SheetTab>
      </SheetTabs>
    </SheetBar>
  );
}

export default function App() {
  const [menu, setMenu] = useState("常用");
  const [query, setQuery] = useState("");

  return (
    <>
      <GlobalStyle />
      <Window>
        <Header>
          <EdgeShadow>
            <EdgePart $grow={290} />
            <EdgePart $grow={286} />
            <EdgePart $grow={302} />
            <EdgePart $grow={378} />
          </EdgeShadow>
          <TitleBar>
            <QuickAccess>
              <QuickButton type="button" aria-label="CAXA">{icons.app}</QuickButton>
              <QuickButton type="button" aria-label="新建">{icons.newFile}</QuickButton>
              <QuickButton type="button" aria-label="打开">{icons.openFile}</QuickButton>
              <QuickButton type="button" aria-label="保存">{icons.save}</QuickButton>
              <QuickButton type="button" aria-label="另存为">{icons.saveAs}</QuickButton>
              <QuickButton type="button" aria-label="打印">{icons.print}</QuickButton>
              <QuickButton type="button" aria-label="撤销">{icons.undo}</QuickButton>
              <QuickButton type="button" $narrow aria-label="撤销列表"><Caret color="#c8cede" /></QuickButton>
              <QuickButton type="button" aria-label="重做">{icons.redo}</QuickButton>
              <QuickButton type="button" $narrow aria-label="重做列表"><Caret color="#c8cede" /></QuickButton>
              <QuickButton type="button" $narrow aria-label="自定义">{icons.customize}</QuickButton>
            </QuickAccess>
            <WindowTitle>
              CAXA CAD 电子图板 2020 - [C:\Users\liao_\AppData\Local\Temp\360zip$Temp\360$4\A4-大齿轮轴滑套
            </WindowTitle>
          </TitleBar>
          <MenuBar>
            {menus.map((name, i) => (
              <MenuTab key={name} type="button" $wide={i === 0} $active={name === menu} onClick={() => setMenu(name)}>
                {name}
              </MenuTab>
            ))}
            <SearchBox>
              {icons.bulbOutline}
              <SearchInput
                type="text"
                aria-label="功能搜索"
                placeholder="功能搜索..."
                value={query}
                onChange={(e) => setQuery(e.target.value)}
              />
            </SearchBox>
          </MenuBar>
        </Header>

        <Ribbon />

        <Workspace>
          <DockStrip>
            <DockGrip />
            <DockButton type="button">
              {icons.library}
              <DockText>图库</DockText>
            </DockButton>
          </DockStrip>
          <PropertyPanel />
          <Splitter />
          <Documents>
            <DocumentTabs />
            <Canvas>
              <SleeveDrawing />
            </Canvas>
            <SheetNavigation />
          </Documents>
        </Workspace>
      </Window>
      <Watermark>CSDN @biyezuopinvip</Watermark>
    </>
  );
}
